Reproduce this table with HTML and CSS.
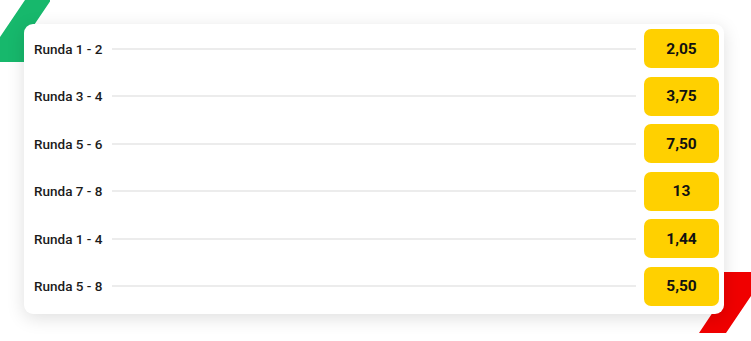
FILE: index.html
```html
<!DOCTYPE html>
<html lang="pl">
<head>
<meta charset="utf-8">
<title>Rundy</title>
<link rel="stylesheet" href="styles.css">
</head>
<body>
<div class="stage">
  <div class="deco deco-green"></div>
  <div class="deco deco-red"></div>
  <div class="card">
    <div class="row"><span class="label">Runda 1 - 2</span><span class="line"></span><span class="odd">2,05</span></div>
    <div class="row"><span class="label">Runda 3 - 4</span><span class="line"></span><span class="odd">3,75</span></div>
    <div class="row"><span class="label">Runda 5 - 6</span><span class="line"></span><span class="odd">7,50</span></div>
    <div class="row"><span class="label">Runda 7 - 8</span><span class="line"></span><span class="odd">13</span></div>
    <div class="row"><span class="label">Runda 1 - 4</span><span class="line"></span><span class="odd">1,44</span></div>
    <div class="row"><span class="label">Runda 5 - 8</span><span class="line"></span><span class="odd">5,50</span></div>
  </div>
</div>
</body>
</html>
```
FILE: styles.css
```css
html, body {
  margin: 0;
  padding: 0;
  background: #ffffff;
}
body {
  font-family: Roboto, "Liberation Sans", Arial, sans-serif;
  color: #1b1b1b;
}
.stage {
  position: relative;
  width: 751px;
  height: 341px;
  overflow: hidden;
}
.deco {
  position: absolute;
  width: 80px;
  height: 62px;
}
.deco-green {
  left: -30px;
  top: 0;
  background: #17b86c;
  clip-path: polygon(55px 0, 81px 0, 60px 31px, 60px 62px, 13px 62px);
}
.deco-red {
  left: 699px;
  top: 272px;
  width: 80px;
  height: 61px;
  background: #f00000;
  clip-path: polygon(26px 0, 52px 0, 52px 24px, 27px 61px, 0 61px, 20px 31px, 20px 0);
}
.card {
  position: relative;
  margin: 24px 0 0 24px;
  width: 700px;
  height: 290px;
  box-sizing: border-box;
  padding: 5px 5px 8px 10px;
  background: #ffffff;
  border-radius: 9px;
  box-shadow: 0 4px 18px rgba(0, 0, 0, 0.13);
  display: flex;
  flex-direction: column;
  gap: 8.6px;
}
.row {
  display: flex;
  align-items: center;
  height: 39px;
}
.label {
  font-size: 13.5px;
  font-weight: 500;
  white-space: nowrap;
  color: #1b1b1b;
}
.line {
  flex: 1;
  height: 2px;
  background: #ececec;
  margin: 0 8px 0 10px;
}
.odd {
  width: 75px;
  height: 39px;
  border-radius: 7px;
  background: #ffd000;
  display: flex;
  align-items: center;
  justify-content: center;
  font-size: 15.5px;
  font-weight: 700;
  color: #111111;
}
```
